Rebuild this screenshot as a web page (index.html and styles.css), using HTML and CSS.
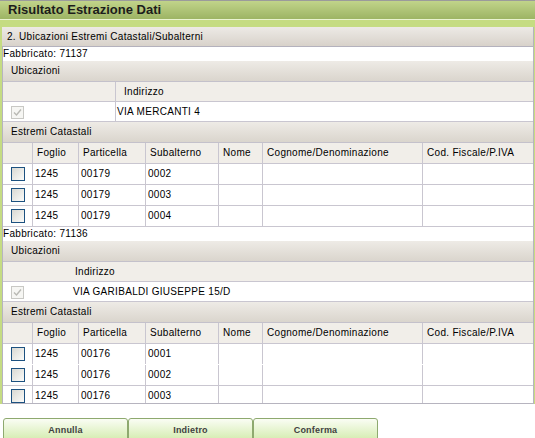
FILE: index.html
```html
<!DOCTYPE html>
<html lang="it">
<head>
<meta charset="utf-8">
<title>Risultato Estrazione Dati</title>
<link rel="stylesheet" href="styles.css">
</head>
<body>
<div class="title">Risultato Estrazione Dati</div>
<div class="panel">
  <div class="sec-head">2. Ubicazioni Estremi Catastali/Subalterni</div>
  <div class="scroll">
    <div class="block">
      <div class="fab">Fabbricato: 71137</div>
      <div class="bar">Ubicazioni</div>
      <div class="row ubi ubi-a head"><div></div><div class="c">Indirizzo</div></div>
      <div class="row ubi ubi-a"><div><span class="chk dis"><svg viewBox="0 0 11 11" width="11" height="11"><polyline points="2,5.5 4.5,8 9,2.5" fill="none" stroke="#b9b9b4" stroke-width="1.4"/></svg></span></div><div class="c">VIA MERCANTI 4</div></div>
      <div class="bar">Estremi Catastali</div>
      <div class="row est head"><div></div><div>Foglio</div><div>Particella</div><div>Subalterno</div><div>Nome</div><div>Cognome/Denominazione</div><div>Cod. Fiscale/P.IVA</div></div>
      <div class="row est"><div><span class="chk"></span></div><div>1245</div><div>00179</div><div>0002</div><div></div><div></div><div></div></div>
      <div class="row est"><div><span class="chk"></span></div><div>1245</div><div>00179</div><div>0003</div><div></div><div></div><div></div></div>
      <div class="row est"><div><span class="chk"></span></div><div>1245</div><div>00179</div><div>0004</div><div></div><div></div><div></div></div>
    </div>
    <div class="block">
      <div class="fab">Fabbricato: 71136</div>
      <div class="bar">Ubicazioni</div>
      <div class="row ubi ubi-b head"><div></div><div class="c">Indirizzo</div></div>
      <div class="row ubi ubi-b"><div><span class="chk dis"><svg viewBox="0 0 11 11" width="11" height="11"><polyline points="2,5.5 4.5,8 9,2.5" fill="none" stroke="#b9b9b4" stroke-width="1.4"/></svg></span></div><div class="c">VIA GARIBALDI GIUSEPPE 15/D</div></div>
      <div class="bar">Estremi Catastali</div>
      <div class="row est head"><div></div><div>Foglio</div><div>Particella</div><div>Subalterno</div><div>Nome</div><div>Cognome/Denominazione</div><div>Cod. Fiscale/P.IVA</div></div>
      <div class="row est noline"><div><span class="chk"></span></div><div>1245</div><div>00176</div><div>0001</div><div></div><div></div><div></div></div>
      <div class="row est"><div><span class="chk"></span></div><div>1245</div><div>00176</div><div>0002</div><div></div><div></div><div></div></div>
      <div class="row est"><div><span class="chk"></span></div><div>1245</div><div>00176</div><div>0003</div><div></div><div></div><div></div></div>
    </div>
  </div>
</div>
<div class="buttons">
  <button class="btn">Annulla</button>
  <button class="btn">Indietro</button>
  <button class="btn">Conferma</button>
</div>
</body>
</html>
```
FILE: styles.css
```css
html {
  overflow: hidden;
}
body {
  margin: 0;
  width: 535px;
  height: 438px;
  overflow: hidden;
  background: #fff;
  font-family: "Liberation Sans", Arial, sans-serif;
  font-size: 10px;
  letter-spacing: 0.3px;
  color: #000;
}
.title {
  height: 18px;
  border-top: 1px solid #9b9b9b;
  background: linear-gradient(#c1d48a, #9db464);
  font-size: 13px;
  font-weight: bold;
  letter-spacing: 0;
  line-height: 18px;
  padding-left: 8px;
  color: #1c1c1c;
}
.panel {
  background: #c5dc82;
  border-top: 1px solid #eaf3d0;
  padding: 7px 1px 0 2px;
}
.sec-head {
  height: 19px;
  line-height: 19px;
  padding-left: 5px;
  border-bottom: 1px solid #b4b2bd;
  border-right: 1px solid #b4b2bd;
  background: linear-gradient(#edeae6, #d8d2ca);
}
.scroll {
  height: 356px;
  overflow: hidden;
  background: #fff;
  border: 1px solid #b6b4bf;
  border-top: 0;
}
.fab {
  height: 14px;
  line-height: 14px;
}
.bar {
  height: 20px;
  line-height: 20px;
  padding-left: 8px;
  border-bottom: 1px solid #c4c1cb;
  background: linear-gradient(#eeebe6, #dad5cd);
}
.row {
  display: grid;
  height: 21px;
  box-sizing: border-box;
  line-height: 20px;
  border-bottom: 1px solid #c9c6d0;
  white-space: nowrap;
}
.row.noline {
  border-bottom-color: #fff;
}
.head {
  background: #f1eee9;
}
.ubi {
  height: 20px;
  line-height: 19px;
}
.ubi-a {
  grid-template-columns: 112px 1fr;
}
.ubi-a .c {
  border-left: 1px solid #c9c6d0;
  padding-left: 1px;
}
.ubi-a.head .c {
  padding-left: 8px;
}
.ubi-b {
  grid-template-columns: 68px 1fr;
}
.ubi-b .c {
  padding-left: 2px;
}
.ubi-b.head .c {
  padding-left: 4px;
}
.est {
  grid-template-columns: 29px 46px 67px 73px 44px 160px 1fr;
}
.est > div + div {
  border-left: 1px solid #c9c6d0;
  padding-left: 2px;
}
.est.head > div + div {
  padding-left: 4px;
}
.chk {
  display: block;
  width: 14px;
  height: 14px;
  box-sizing: border-box;
  margin: 3px 0 0 8px;
  border: 1px solid #1c5180;
  background: linear-gradient(135deg, #d8d8d2, #fbfbf9);
}
.chk.dis {
  width: 13px;
  height: 13px;
  margin-top: 4px;
  border-color: #c8c8c4;
  background: #f6f6f3;
}
.chk svg {
  display: block;
}
.buttons {
  display: flex;
  padding: 14px 0 0 3px;
}
.btn {
  width: 125px;
  height: 24px;
  box-sizing: border-box;
  margin: 0;
  padding: 0;
  border: 1px solid #8ea96f;
  border-radius: 3px 3px 0 0;
  background: linear-gradient(#fafdf4, #d2ebac);
  font-family: "Liberation Sans", Arial, sans-serif;
  font-size: 9px;
  font-weight: bold;
  letter-spacing: 0.2px;
  line-height: 22px;
  color: #404040;
  text-align: center;
}
```
